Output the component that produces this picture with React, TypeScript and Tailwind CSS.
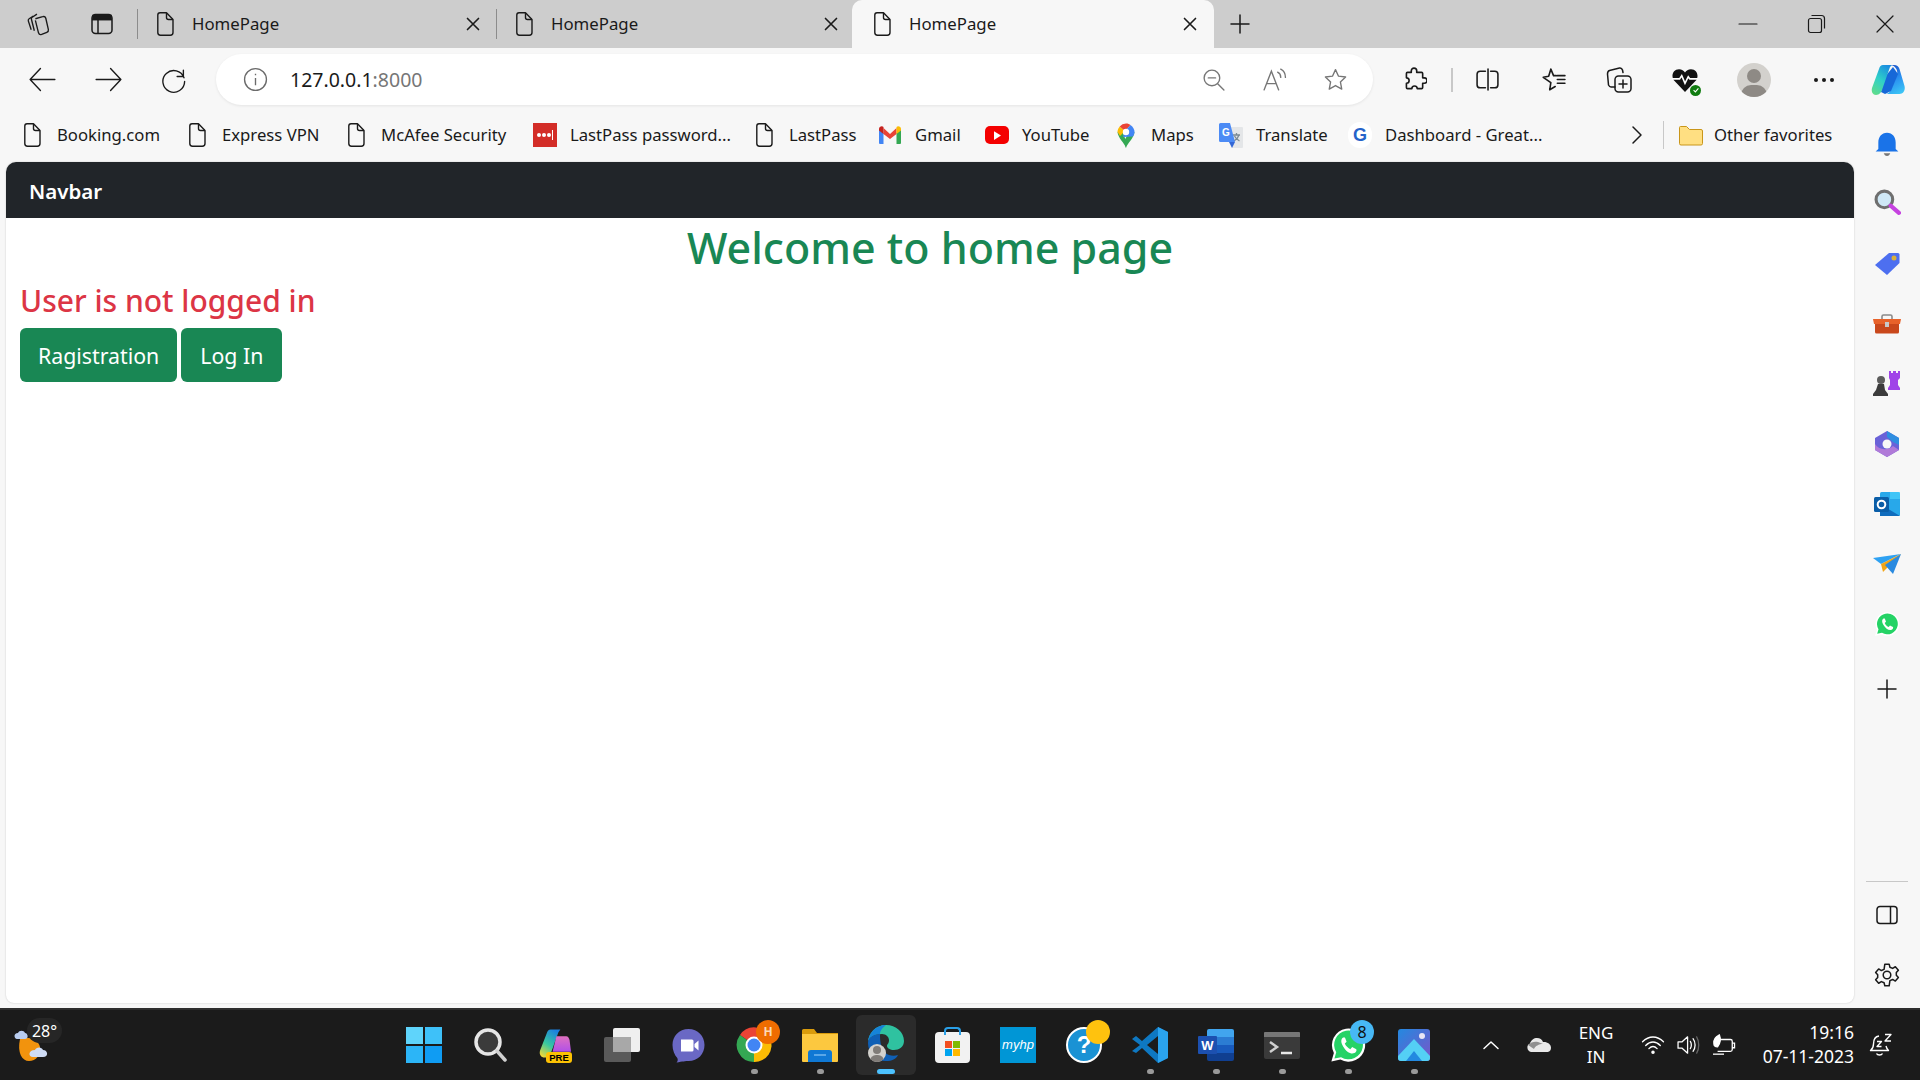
import React from "react";

type IconProps = { className?: string };

const Line: React.FC<{ d: string; className?: string; w?: number; c?: string; box?: number }> = ({
    d,
    className = "w-6 h-6",
    w = 1.5,
    c = "#1a1a1a",
    box = 24,
}) => (
    <svg viewBox={`0 0 ${box} ${box}`} className={className} fill="none" stroke={c} strokeWidth={w} strokeLinecap="round" strokeLinejoin="round">
        <path d={d} />
    </svg>
);

const PageIcon: React.FC<IconProps> = ({ className = "w-[17px] h-[24px]" }) => (
    <svg viewBox="0 0 17 24" className={className} fill="none" stroke="#1a1a1a" strokeWidth="1.4" strokeLinejoin="round">
        <path d="M3 .8h6.5L16 7.5V20.5A2.7 2.7 0 0 1 13.3 23.2H3.5A2.7 2.7 0 0 1 .8 20.5V3A2.2 2.2 0 0 1 3 .8Z" />
        <path d="M9.5 1V5.5A2 2 0 0 0 11.5 7.5H16" />
    </svg>
);

const Tab: React.FC<{ active?: boolean; second?: boolean }> = ({ active, second }) => (
    <div
        className={
            active
                ? "relative flex h-12 w-[362px] shrink-0 items-center rounded-t-[10px] bg-[#f7f7f7] pl-[22px] pr-[13px]"
                : second
                  ? "flex h-[36px] w-[355px] shrink-0 items-center pl-[19px] pr-[10px]"
                  : "flex h-[36px] w-[358px] shrink-0 items-center pl-[19px] pr-[12px]"
        }
    >
        <PageIcon />
        <span className="ml-[18px] text-[16.800px] text-[#1a1a1a]">HomePage</span>
        <Line d="M6 6 18 18M18 6 6 18" className="ml-auto h-[22px] w-[22px]" w={1.8} />
    </div>
);

const Bookmark: React.FC<{ icon: React.ReactNode; label: string; w: number }> = ({ icon, label, w }) => (
    <div className="flex h-full shrink-0 items-center" style={{ width: w }}>
        <div className="flex w-[24px] justify-center">{icon}</div>
        <span className="ml-[13px] whitespace-nowrap text-[16.7px] text-[#1a1a1a]">{label}</span>
    </div>
);

const LastPassIcon = () => (
    <div className="flex h-[24px] w-[24px] items-center justify-center gap-[1.5px] bg-[#d32d27]">
        <i className="h-[3.5px] w-[3.5px] rounded-full bg-white" />
        <i className="h-[3.5px] w-[3.5px] rounded-full bg-white" />
        <i className="h-[3.5px] w-[3.5px] rounded-full bg-white" />
        <i className="h-[10px] w-px bg-white" />
    </div>
);

const GmailIcon = () => (
    <svg viewBox="0 0 24 20" className="h-[20px] w-[24px]">
        <path d="M1 4v14a1 1 0 0 0 1 1h3.500V8Z" fill="#4285f4" />
        <path d="M18.500 8v11H22a1 1 0 0 0 1-1V4Z" fill="#34a853" />
        <path d="M5.500 3 12 9l6.500-6v6L12 14 5.500 9Z" fill="#ea4335" />
        <path d="M1 4c0-2.500 3-3.500 4.500-2V9L1 5.500Z" fill="#c5221f" />
        <path d="M23 4c0-2.500-3-3.500-4.500-2V9L23 5.500Z" fill="#fbbc04" />
    </svg>
);

const YoutubeIcon = () => (
    <div className="flex h-[18px] w-[24px] items-center justify-center rounded-[5px] bg-[#f40000]">
        <svg viewBox="0 0 8 10" className="h-[9px] w-[7px]"><path d="M0 0 8 5 0 10Z" fill="#fff" /></svg>
    </div>
);

const MapsIcon = () => (
    <svg viewBox="0 0 18 25" className="h-[25px] w-[18px]">
        <path d="M9 25C7.500 20 1 15 .5 9L5 7l4 11Z" fill="#34a853" />
        <path d="M9 25c1.500-5 8-10 8.500-16L13 8 7 18Z" fill="#34a853" />
        <path d="M.5 9C.5 7 1.500 5 2.700 3.500L8 8 3 13Z" fill="#fbbc04" />
        <path d="M2.700 3.500A8.700 8.700 0 0 1 9 .5c2 0 3.500.7 4.500 1.500L8 8Z" fill="#ea4335" />
        <path d="M13.500 2c2.500 1.800 4 4.500 4 7 0 1.500-.5 3-1.500 4.500L6 14 8 8Z" fill="#4285f4" />
        <circle cx="9" cy="9" r="3.200" fill="#fff" />
    </svg>
);

const TranslateIcon = () => (
    <svg viewBox="0 0 24 25" className="h-[25px] w-[24px]">
        <path d="M10 4h13a1 1 0 0 1 1 1v19a1 1 0 0 1-1 1H13Z" fill="#e4e6e8" />
        <path d="M14 12h7M17.500 10v2M20 12c-1 3-3 5-5 6M15.500 13c1 2 3 4 5 5" stroke="#7b8a93" fill="none" strokeWidth="1.300" />
        <path d="M1.500 0H11l5 19H1.500A1.500 1.500 0 0 1 0 17.500V1.500A1.500 1.500 0 0 1 1.500 0Z" fill="#4c8bf5" />
        <text x="3" y="13" fontSize="10" fontWeight="700" fill="#fff" fontFamily="Liberation Sans">G</text>
        <path d="M10 19h6l-3 6Z" fill="#3367d6" />
    </svg>
);

const GIcon = () => (
    <div className="flex h-[26px] w-[26px] items-center justify-center rounded-full bg-white">
        <span className="font-['Liberation_Sans'] text-[18px] font-bold leading-none text-[#2563c9]">G</span>
    </div>
);

const AddressBar = () => (
    <div className="flex h-[51px] w-[1157px] shrink-0 items-center rounded-full bg-white pl-[27px] pr-[25px] shadow-[0_1px_3px_rgba(0,0,0,0.08)]">
        <svg viewBox="0 0 24 24" className="h-[25px] w-[25px]" fill="none" stroke="#6b6b6b" strokeWidth="1.300">
            <circle cx="12" cy="12" r="10.500" />
            <path d="M12 10.500v7M12 6.500v1.500" />
        </svg>
        <span className="ml-[22px] text-[19.5px] text-[#1a1a1a]">
            127.0.0.1<span className="text-[#767676]">:8000</span>
        </span>
        <div className="ml-auto flex items-center gap-[36px]">
            <Line d="M10.500 3a7.500 7.500 0 1 1 0 15 7.500 7.500 0 0 1 0-15ZM7 10.500h7M16 16l6 6" c="#767676" className="h-[25px] w-[25px]" w={1.300} />
            <svg viewBox="0 0 24 24" className="h-[25px] w-[25px]" fill="none" stroke="#767676" strokeWidth="1.300" strokeLinecap="round">
                <path d="M2 22 9 4l7 18M4.500 16h9M15 5c2 1 3 3 3 5M18 2c3 1.500 4.500 4.500 4.500 8" />
            </svg>
            <Line d="M12 2.500l2.900 6.300 6.800.8-5 4.700 1.300 6.900-6-3.400-6 3.400 1.300-6.900-5-4.700 6.800-.8Z" c="#767676" className="h-[25px] w-[25px]" w={1.300} />
        </div>
    </div>
);

const HeartStatus = () => (
    <div className="relative h-[26px] w-[26px]">
        <svg viewBox="0 0 24 24" className="h-[26px] w-[26px]">
            <path d="M12 23 1.500 12C-1 8 1 2 6.500 2 9 2 11 3.500 12 5c1-1.500 3-3 5.500-3C23 2 25 8 22.500 12Z" fill="#111" />
            <path d="M0 11h7l2-3 3 7 3-6 1.500 2H24" stroke="#fff" strokeWidth="1.500" fill="none" />
        </svg>
        <div className="absolute -bottom-[3px] -right-[3px] flex h-[11px] w-[11px] items-center justify-center rounded-full bg-[#107c10]">
            <svg viewBox="0 0 10 10" className="h-[8px] w-[8px]"><path d="M2 5.200 4.200 7.400 8 3" stroke="#fff" strokeWidth="1.300" fill="none" /></svg>
        </div>
    </div>
);

const Avatar = () => (
    <div className="relative h-[34px] w-[34px] overflow-hidden rounded-full bg-[#d3d1cd]">
        <i className="absolute left-[10px] top-[6px] h-[14px] w-[14px] rounded-full bg-[#8e8a85]" />
        <i className="absolute left-[4px] top-[22px] h-[20px] w-[26px] rounded-full bg-[#8e8a85]" />
    </div>
);

// edge sidebar copilot button
const CopilotIcon = () => (
    <svg viewBox="0 0 34 32" className="h-[32px] w-[34px]">
        <defs>
            <linearGradient id="cpa" x1="0.700" y1="0" x2="0.200" y2="1">
                <stop offset="0" stopColor="#1b8fe0" />
                <stop offset="0.500" stopColor="#2fd0c8" />
                <stop offset="1" stopColor="#5fdc8c" />
            </linearGradient>
            <linearGradient id="cpb" x1="0.300" y1="0" x2="0.700" y2="1">
                <stop offset="0" stopColor="#1a50c8" />
                <stop offset="0.500" stopColor="#2a8ff0" />
                <stop offset="1" stopColor="#3cc4f5" />
            </linearGradient>
        </defs>
        <path d="M20 1h3c3 0 4.500 1.500 5.500 4l5 17c1 4-1 8-5 8H14c3 0 5-2 6-5l6-15c1-3-1-8-6-9Z" fill="url(#cpb)" />
        <path d="M13 14 22 3l5 7-7 17-6 3-4-2Z" fill="#1668d8" />
        <path d="M12 1h9l-2 2-8 23c-.8 2-2.500 5-6 5-3 0-5-3-4-7L8 5c.7-2.500 2-4 4-4Z" fill="url(#cpa)" />
    </svg>
);

const PreIcon = () => (
    <div className="relative h-[34px] w-[34px]">
        <svg viewBox="0 0 34 32" className="h-[32px] w-[33px]">
            <defs>
                <linearGradient id="pra" x1="0.700" y1="0" x2="0.200" y2="1">
                    <stop offset="0" stopColor="#1b7fe0" />
                    <stop offset="0.550" stopColor="#38c8a0" />
                    <stop offset="1" stopColor="#f0d838" />
                </linearGradient>
                <linearGradient id="prb" x1="0.500" y1="0" x2="0.500" y2="1">
                    <stop offset="0" stopColor="#e070c0" />
                    <stop offset="1" stopColor="#b050e8" />
                </linearGradient>
            </defs>
            <path d="M12 1h10l-2 3-8 22c-1 3-3 4-6 4-4 0-6-3-5-7L8 5c.7-2.500 2-4 4-4Z" fill="url(#pra)" />
            <path d="M18 8h10c2 0 3 2 3.500 4L33 24H14Z" fill="url(#prb)" />
        </svg>
        <span className="absolute -bottom-[1px] left-[7px] w-[26px] rounded-[3px] bg-[#fdc204] text-center font-['Liberation_Sans'] text-[9.500px] font-bold leading-[11px] text-black">PRE</span>
    </div>
);

const WhatsAppGlyph: React.FC<IconProps> = ({ className }) => (
    <svg viewBox="0 0 26 26" className={className}>
        <path d="M1 25l1.800-6.300A12 12 0 1 1 7.500 23.500Z" fill="#fff" />
        <path d="M3.200 22.800l1.300-4.500A10.400 10.400 0 1 1 8 21.800Z" fill="#25d366" />
        <path d="M9.500 7.500c-1.500 1-2 3 0 6.500s5 5.500 7.500 5c1.800-.5 2.500-2 2-3l-3-1.500-1.300 1.500c-1.500-.5-3.500-2.500-4-4l1.300-1.300L10.800 7.500Z" fill="#fff" />
    </svg>
);

const RailItem: React.FC<{ children: React.ReactNode }> = ({ children }) => (
    <div className="flex h-[60px] items-center justify-center">{children}</div>
);

const Sidebar = () => (
    <aside className="flex w-[66px] shrink-0 flex-col items-center pt-[3px]">
        <RailItem>
            <svg viewBox="0 0 24 24" className="h-[26px] w-[26px]">
                <path d="M12 1.500c5 0 8 4 8 9v6l2.500 2.500h-21L4 16.500v-6c0-5 3-9 8-9Z" fill="#1a73e8" />
                <path d="M9 20.500h6c-.5 1.500-1.500 2.500-3 2.500s-2.500-1-3-2.500Z" fill="#777" />
            </svg>
        </RailItem>
        <RailItem>
            <svg viewBox="0 0 26 26" className="h-[27px] w-[27px] -translate-y-[2px]">
                <circle cx="10" cy="10" r="8" fill="#cfe8f6" stroke="#6f6f6f" strokeWidth="3" />
                <path d="M16 16l8 7" stroke="#c643e0" strokeWidth="4" strokeLinecap="round" />
            </svg>
        </RailItem>
        <RailItem>
            <svg viewBox="0 0 26 24" className="h-[24px] w-[26px]">
                <path d="M15 1h9a1.500 1.500 0 0 1 1.500 1.500V11L13 23 1 13Z" fill="#4d6ff0" />
                <circle cx="20" cy="6" r="2.500" fill="#d9b13c" />
            </svg>
        </RailItem>
        <RailItem>
            <svg viewBox="0 0 28 20" className="h-[20px] w-[28px]">
                <path d="M9 5V2.500A1.500 1.500 0 0 1 10.500 1h7A1.500 1.500 0 0 1 19 2.500V5" stroke="#8a8a8a" strokeWidth="1.600" fill="none" />
                <path d="M0 5h28l-1 5H1Z" fill="#e8622a" />
                <path d="M2 10h24v8a1.500 1.500 0 0 1-1.500 1.500h-21A1.500 1.500 0 0 1 2 18Z" fill="#c9481c" />
                <rect x="12" y="8" width="4" height="5" fill="#c9c9c9" />
            </svg>
        </RailItem>
        <RailItem>
            <svg viewBox="0 0 28 26" className="h-[26px] w-[28px]">
                <path d="M16 0h2v2h2V0h3v2h2V0h2v7l-2 2v5l2 3v2H15v-2l2-3V9l-1-2Z" fill="#a044e8" />
                <circle cx="8" cy="9" r="4" fill="#5c5c5c" />
                <path d="M5 13h6l1 6 3 4v2H0v-2l3-4Z" fill="#3c3c3c" />
            </svg>
        </RailItem>
        <RailItem>
            <svg viewBox="0 0 24 26" className="h-[26px] w-[24px]">
                <path d="M12 0 24 7v12l-12 7L0 19V7Z" fill="#6a62d8" />
                <path d="M12 0 24 7v7l-6-3-6-5Z" fill="#2f8ee0" />
                <path d="M0 13c4 6 12 7 18 2l6 4-12 7L0 19Z" fill="#b07ad8" />
                <circle cx="12" cy="13" r="4.500" fill="#f7f7f7" />
            </svg>
        </RailItem>
        <RailItem>
            <svg viewBox="0 0 26 24" className="h-[24px] w-[26px]">
                <rect x="6" y="0" width="20" height="24" rx="1.500" fill="#28a8ea" />
                <rect x="16" y="0" width="10" height="7" fill="#50d9ff" opacity="0.600" />
                <path d="M6 12 26 24H6Z" fill="#0f6cbd" />
                <rect x="0" y="5" width="15" height="15" rx="1.500" fill="#0a5ea8" />
                <circle cx="7.500" cy="12.500" r="3.800" fill="none" stroke="#fff" strokeWidth="2" />
            </svg>
        </RailItem>
        <RailItem>
            <svg viewBox="0 0 28 20" className="h-[20px] w-[28px]">
                <path d="M0 4 28 0 8 10Z" fill="#2ea1f2" />
                <path d="M28 0 8 10l2 8Z" fill="#f2a516" />
                <path d="M28 0 12 11l8 9Z" fill="#2a8ae0" />
            </svg>
        </RailItem>
        <RailItem>
            <WhatsAppGlyph className="h-[26px] w-[26px]" />
        </RailItem>
        <div className="flex h-[70px] items-center justify-center">
            <Line d="M12 3v18M3 12h18" className="h-[24px] w-[24px]" />
        </div>
        <div className="mt-auto h-px w-[42px] bg-[#c8c8c8]" />
        <div className="mt-[19px] flex h-[28px] items-center">
            <svg viewBox="0 0 24 24" className="h-[24px] w-[24px]" fill="none" stroke="#1a1a1a" strokeWidth="1.500">
                <rect x="2" y="3.500" width="20" height="17" rx="3" />
                <path d="M15.500 3.500v17" />
            </svg>
        </div>
        <div className="mb-[13px] mt-[31px] flex h-[30px] items-center">
            <Line d="M12 8.500a3.500 3.500 0 1 0 0 7 3.500 3.500 0 0 0 0-7ZM10 2h4l.7 2.800 2.500 1.100 2.500-1.500 2.800 3.200-1.900 2.200v2.400l1.900 2.200-2.800 3.200-2.500-1.500-2.500 1.100L14 22h-4l-.7-2.800-2.500-1.100-2.500 1.500-2.800-3.200 1.900-2.200v-2.400L1.500 9.600l2.800-3.200 2.500 1.500 2.500-1.100Z" className="h-[26px] w-[26px]" w={1.400} />
        </div>
    </aside>
);

const TaskIcon: React.FC<{ children: React.ReactNode; dot?: boolean; active?: boolean }> = ({ children, dot, active }) => (
    <div className="relative flex h-[60px] w-[66px] items-center justify-center">
        {active && <i className="absolute inset-y-0 left-[3px] right-[3px] rounded-[6px] bg-[#2b2b2b]" />}
        <div className="relative flex items-center justify-center">{children}</div>
        {dot && <i className="absolute bottom-[1px] left-[30px] h-[5px] w-[7px] rounded-full bg-[#9a9a9a]" />}
        {active && <i className="absolute bottom-[1px] left-[24px] h-[5px] w-[18px] rounded-full bg-[#4cc2ff]" />}
    </div>
);

const Taskbar = () => (
    <footer className="relative flex h-[72px] shrink-0 items-center border-t-2 border-[#2e2e2e] bg-[#1b1b1b]">
        <div className="absolute left-[14px] top-[8px] h-[52px] w-[50px]">
            <svg viewBox="0 0 38 36" className="absolute left-0 top-[9px] h-[36px] w-[38px]">
                <path d="M6 12c8-3 18 0 20 8 1 8-4 14-11 14C8 34 3 26 6 12Z" fill="#f2930d" />
                <path d="M4 6c1-3 6-3 7 0 3 0 4 6 0 6H3C0 12-1 6 4 6Z" fill="#b9cdf0" />
                <path d="M21 23c1-3.500 7-3.500 8 0 5 0 6 7 0 7H19c-5 0-5-7 2-7Z" fill="#cfdcf5" />
            </svg>
            <span className="absolute left-[13px] top-0 flex h-[25px] w-[35px] items-center justify-center rounded-full bg-[#262626] text-[16px] leading-none text-white">28°</span>
        </div>

        <div className="ml-[391px] flex items-center">
            <TaskIcon>
                <div className="grid h-[36px] w-[36px] grid-cols-2 gap-[1.500px]">
                    <i className="bg-[#5fd4fb]" />
                    <i className="bg-[#3ec1f9]" />
                    <i className="bg-[#2cb5f7]" />
                    <i className="bg-[#0f9cf3]" />
                </div>
            </TaskIcon>
            <TaskIcon>
                <svg viewBox="0 0 34 36" className="h-[36px] w-[34px]">
                    <circle cx="15" cy="15" r="12" fill="#3b3b3b" stroke="#e6e6e6" strokeWidth="3.500" />
                    <path d="M24 24l8 9" stroke="#d0d0d0" strokeWidth="3.500" strokeLinecap="round" />
                </svg>
            </TaskIcon>
            <TaskIcon>
                <PreIcon />
            </TaskIcon>
            <TaskIcon>
                <div className="relative h-[34px] w-[36px]">
                    <i className="absolute left-0 top-[9px] h-[25px] w-[27px] rounded-[2px] bg-[#5a5a5a]" />
                    <i className="absolute left-[9px] top-0 h-[24px] w-[27px] rounded-[2px] bg-[#efefef]" />
                    <i className="absolute left-[9px] top-[9px] h-[15px] w-[18px] bg-[#a8a8a8]" />
                </div>
            </TaskIcon>
            <TaskIcon>
                <svg viewBox="0 0 33 35" className="h-[35px] w-[33px]">
                    <path d="M16.500 1C26 1 32.500 8 32.500 17S26 33 16.500 33c-3 0-6 .5-12 1.500 1.500-1.500 1.500-3 .8-4.500C2.500 27 .5 22 .5 17 .5 8 7 1 16.500 1Z" fill="#6a68c4" />
                    <path d="M9 11.500h11a1.500 1.500 0 0 1 1.500 1.500v9a1.500 1.500 0 0 1-1.500 1.500H9Z" fill="#fff" />
                    <path d="M22.500 16l4-3.500v10l-4-3.500Z" fill="#fff" />
                </svg>
            </TaskIcon>
            <TaskIcon dot>
                <div className="relative h-[36px] w-[36px]">
                    <svg viewBox="0 0 36 36" className="h-[36px] w-[36px]">
                        <path d="M18 18 4 8A17 17 0 0 1 34 11Z" fill="#ea4335" />
                        <path d="M18 18 34 11a17 17 0 0 1-16 24Z" fill="#fbbc04" />
                        <path d="M18 18v17A17 17 0 0 1 4 8Z" fill="#34a853" />
                        <circle cx="18" cy="18" r="8.500" fill="#fff" />
                        <circle cx="18" cy="18" r="6.500" fill="#4285f4" />
                    </svg>
                    <span className="absolute -right-[8px] -top-[7px] flex h-[24px] w-[24px] items-center justify-center rounded-full bg-[#ef6c00] text-[12px] font-bold leading-none text-[#fcd9b6]">H</span>
                </div>
            </TaskIcon>
            <TaskIcon dot>
                <svg viewBox="0 0 36 33" className="h-[33px] w-[36px]">
                    <path d="M0 1.500A1.500 1.500 0 0 1 1.500 0H12l3 4h21v8H0Z" fill="#d99b0c" />
                    <path d="M0 5h36v27a1 1 0 0 1-1 1H1a1 1 0 0 1-1-1Z" fill="#fcc83f" />
                    <path d="M6 33V24a3 3 0 0 1 3-3h18a3 3 0 0 1 3 3v9Z" fill="#0f78d4" />
                    <path d="M12 26h12" stroke="#8cc8f5" strokeWidth="1.200" />
                </svg>
            </TaskIcon>
            <TaskIcon active>
                <div className="relative h-[36px] w-[36px] -translate-y-[2px]">
                    <svg viewBox="0 0 36 36" className="h-[36px] w-[36px]">
                        <path d="M0 18C0 8 8 0 18 0c10 0 18 7 18 16 0 6-5 9-10 9-4 0-7-2-7-4 0-2 2-2 2-6 0-3-3-6-7-6C7 9 0 12 0 18Z" fill="#2fc2a0" />
                        <path d="M0 18C0 8 8 0 18 0c-5 4-6 7-6 9C7 9 0 12 0 18Z" fill="#1683d8" />
                        <path d="M0 18c0 10 8 18 18 18 6 0 10-2 12-6-3 1-6 1-9 0-5-2-9-6-9-21C7 9 0 12 0 18Z" fill="#0f5fb5" />
                    </svg>
                    <div className="absolute bottom-[-1px] left-0 h-[18px] w-[18px] overflow-hidden rounded-full bg-[#d3d1cd]">
                        <i className="absolute left-[5px] top-[2px] h-[8px] w-[8px] rounded-full bg-[#807c78]" />
                        <i className="absolute left-[2px] top-[11px] h-[12px] w-[14px] rounded-full bg-[#807c78]" />
                    </div>
                </div>
            </TaskIcon>
            <TaskIcon>
                <div className="relative mt-[4px] h-[31px] w-[35px] rounded-[4px] bg-[#f2f2f2]">
                    <i className="absolute -top-[5px] left-[9px] h-[8px] w-[17px] rounded-t-[4px] border-2 border-b-0 border-[#2aa0e8]" />
                    <div className="absolute left-[10px] top-[9px] grid h-[15px] w-[15px] grid-cols-2 gap-[1px]">
                        <i className="bg-[#f25022]" />
                        <i className="bg-[#7fba00]" />
                        <i className="bg-[#00a4ef]" />
                        <i className="bg-[#ffb900]" />
                    </div>
                </div>
            </TaskIcon>
            <TaskIcon>
                <div className="flex h-[36px] w-[36px] items-center justify-center bg-[#0096d6] font-['Liberation_Sans'] text-[13px] italic text-white">myhp</div>
            </TaskIcon>
            <TaskIcon>
                <div className="relative h-[36px] w-[36px]">
                    <div className="flex h-[36px] w-[36px] items-center justify-center rounded-full border-2 border-white bg-[#1a92d4] font-['Liberation_Sans'] text-[24px] font-bold text-white">?</div>
                    <i className="absolute -right-[8px] -top-[7px] h-[24px] w-[24px] rounded-full bg-[#ffc20e]" />
                </div>
            </TaskIcon>
            <TaskIcon dot>
                <svg viewBox="0 0 36 36" className="h-[36px] w-[36px]">
                    <path d="M26 0 36 5v26l-10 5L10 21l-6 5-4-2 8-6-8-6 4-3 6 5Z" fill="#0e78c2" />
                    <path d="M26 9 15 18l11 9Z" fill="#1b1b1b" />
                    <path d="M26 0 36 5v26l-10 5Z" fill="#2aa3ee" />
                </svg>
            </TaskIcon>
            <TaskIcon dot>
                <div className="relative h-[32px] w-[36px]">
                    <div className="absolute left-[9px] top-0 flex h-[32px] w-[27px] flex-col">
                        <i className="flex-1 rounded-t-[2px] bg-[#41a5ee]" />
                        <i className="flex-1 bg-[#2b7cd3]" />
                        <i className="flex-1 bg-[#185abd]" />
                        <i className="flex-1 rounded-b-[2px] bg-[#103f91]" />
                    </div>
                    <span className="absolute left-0 top-[7px] flex h-[18px] w-[19px] items-center justify-center rounded-[1px] bg-[#1c50b0] font-['Liberation_Sans'] text-[13px] font-bold leading-none text-white">W</span>
                </div>
            </TaskIcon>
            <TaskIcon dot>
                <svg viewBox="0 0 36 27" className="h-[27px] w-[36px]">
                    <rect width="36" height="27" rx="2" fill="#3a3a3a" />
                    <path d="M1 0h34a1 1 0 0 1 1 1v4H0V1a1 1 0 0 1 1-1Z" fill="#777" />
                    <path d="M6 10l7 5-7 5" stroke="#cfcfcf" strokeWidth="2.500" fill="none" />
                    <path d="M17 21h11" stroke="#e8e8e8" strokeWidth="2.500" />
                </svg>
            </TaskIcon>
            <TaskIcon dot>
                <div className="relative h-[36px] w-[36px]">
                    <WhatsAppGlyph className="h-[36px] w-[36px]" />
                    <span className="absolute -right-[8px] -top-[7px] flex h-[24px] w-[24px] items-center justify-center rounded-full bg-[#47b8f5] text-[16px] leading-none text-[#101010]">8</span>
                </div>
            </TaskIcon>
            <TaskIcon dot>
                <svg viewBox="0 0 32 32" className="h-[32px] w-[32px]">
                    <defs>
                        <linearGradient id="ph" x1="0" y1="0" x2="1" y2="1">
                            <stop offset="0" stopColor="#2389e0" />
                            <stop offset="1" stopColor="#7a55c8" />
                        </linearGradient>
                    </defs>
                    <rect width="32" height="32" rx="3" fill="url(#ph)" />
                    <circle cx="24" cy="7" r="3" fill="#e8e6f5" />
                    <path d="M0 27 16 10l16 17v2a3 3 0 0 1-3 3H3a3 3 0 0 1-3-3Z" fill="#54d0f5" />
                    <path d="M8 32l8-10 8 10Z" fill="#2389e0" />
                </svg>
            </TaskIcon>
        </div>

        <div className="ml-[32px] flex h-full items-center text-white">
            <Line d="M5 15.500 12 9l7 6.500" c="#fff" className="h-[24px] w-[24px]" />
            <svg viewBox="0 0 26 16" className="ml-[23px] h-[16px] w-[26px]">
                <path d="M5 15A4.500 4.500 0 0 1 4 6.500C5 3 8 1 11 1c3 0 5 1.500 6 4 4-.5 8 2 8 5.500S23 15 21 15Z" fill="#e8e8e8" />
                <path d="M2 8c3-3 7-4 10-3l5 2c-4 0-8 2-9 5Z" fill="#8f8f8f" />
            </svg>
            <div className="ml-[19px] flex w-[50px] flex-col items-center text-[17px] leading-[24px]">
                <span>ENG</span>
                <span>IN</span>
            </div>
            <svg viewBox="0 0 26 22" className="ml-[20px] h-[20px] w-[24px]" fill="none" stroke="#fff" strokeWidth="1.500" strokeLinecap="round">
                <path d="M1.500 7.500c7-7 16-7 23 0M5 11.500c5-5 11-5 16 0M8.500 15c3-3 6-3 9 0" />
                <circle cx="13" cy="19" r="1.200" fill="#fff" />
            </svg>
            <svg viewBox="0 0 26 22" className="ml-[11px] h-[20px] w-[25px]" fill="none" stroke="#fff" strokeWidth="1.400" strokeLinejoin="round">
                <path d="M1.500 7.500H6L12 2v18l-6-5.500H1.500Z" />
                <path d="M15 7c1.500 2 1.500 6 0 8M18 4c3 4 3 10 0 14" strokeLinecap="round" />
                <path d="M22 2c3 5 3 13 0 18" stroke="#666" strokeLinecap="round" />
            </svg>
            <svg viewBox="0 0 26 24" className="ml-[11px] h-[22px] w-[24px]" fill="none" stroke="#fff" strokeWidth="1.400">
                <path d="M8 6h12a2 2 0 0 1 2 2v9a2 2 0 0 1-2 2H6M22 10h2.500v5H22" />
                <path d="M8 1c-4 2-7 5-6 10 0 2 2 3 4 3 3-4 4-8 2-13Z" fill="#fff" />
                <path d="M1 22h12" />
            </svg>
            <div className="ml-[23px] -mt-[2px] flex w-[95px] flex-col items-end text-[17.500px] leading-[24px]">
                <span>19:16</span>
                <span className="whitespace-nowrap">07-11-2023</span>
            </div>
            <svg viewBox="0 0 24 24" className="ml-[15px] h-[24px] w-[24px]" fill="none" stroke="#fff" strokeWidth="1.400" strokeLinejoin="round">
                <path d="M10 3C6 3.500 4.500 7 4.500 11c0 3-1 5-3 6.500h18C18 16 17.500 15 17 13" />
                <path d="M7.500 20.500c1 2 5 2 6 0" />
                <path d="M8 8.500h4.500L8 13.500h4.500M16 1.500h6L16 8h6" strokeWidth="1.300" />
            </svg>
        </div>
    </footer>
);

export default function App() {
    return (
        <div className="flex h-[1080px] w-[1920px] flex-col overflow-hidden bg-[#f7f7f7] font-['Noto_Sans',sans-serif]">
            {/* tab strip */}
            <div className="flex h-12 shrink-0 items-center bg-[#cdcdcd]">
                <div className="flex w-[137px] shrink-0 items-center pl-[26px]">
                    <svg viewBox="0 0 24 24" className="h-[25px] w-[25px] shrink-0" fill="none" stroke="#1a1a1a" strokeWidth="1.300" strokeLinejoin="round">
                        <path d="M9 6.500 16 4.500c1.500-.5 2.500 0 3 1.500l2.500 11c.3 1.500-.3 2-1.500 2.500l-5 2c-1.500.5-2.500 0-3-1.500L9 8M7 4 3 6.500c-.8.5-1 1-.8 2L5 17M10.500 2 6 5c-.8.5-1 1-.8 2l2.800 11" />
                    </svg>
                    <svg viewBox="0 0 24 24" className="ml-[39px] h-[24px] w-[24px] shrink-0" fill="none" stroke="#1a1a1a" strokeWidth="1.500">
                        <rect x="2" y="2.500" width="20" height="19" rx="3.500" />
                        <path d="M2 7.500h20" />
                        <path d="M3 3.500h18v4H3Z" fill="#1a1a1a" />
                        <path d="M8 7.500v14" />
                    </svg>
                </div>
                <div className="h-[30px] w-px shrink-0 bg-[#8c8c8c]" />
                <Tab />
                <div className="h-[30px] w-px shrink-0 bg-[#8c8c8c]" />
                <Tab second />
                <Tab active />
                <Line d="M12 3v18M3 12h18" className="ml-[14px] h-[24px] w-[24px]" w={1.500} />
                <div className="ml-auto flex items-center pr-[23px]">
                    <Line d="M3 12h18" className="h-[24px] w-[24px]" w={1.100} />
                    <svg viewBox="0 0 24 24" className="ml-[44px] h-[24px] w-[24px]" fill="none" stroke="#1a1a1a" strokeWidth="1.200">
                        <rect x="4.500" y="6.500" width="13" height="14" rx="2" />
                        <path d="M7.500 3.500h10a3 3 0 0 1 3 3v10" />
                    </svg>
                    <Line d="M4 4 20 20M20 4 4 20" className="ml-[45px] h-[24px] w-[24px]" w={1.200} />
                </div>
            </div>

            {/* toolbar */}
            <div className="flex h-[63px] shrink-0 items-center">
                <div className="flex w-[216px] shrink-0 items-center pl-[26px]">
                    <Line d="M21 12H3M10.500 4 3 12l7.500 8" className="h-[33px] w-[33px]" w={1} />
                    <Line d="M3 12h18M13.500 4 21 12l-7.500 8" className="ml-[33px] h-[33px] w-[33px]" w={1} />
                    <Line d="M19.500 5v5h-5M20 11A8.700 8.700 0 1 0 20.500 14" className="ml-[34px] h-[30px] w-[30px] -translate-y-[1px]" w={1.100} />
                </div>
                <AddressBar />
                <div className="ml-[28px] flex items-center">
                    <Line d="M9.500 3.500a2.500 2.500 0 0 1 5 0V5H19a1 1 0 0 1 1 1v4h1.500a2.500 2.500 0 0 1 0 5H20v4a1 1 0 0 1-1 1h-4a2.500 2.500 0 0 0-5 0H6a1 1 0 0 1-1-1v-4a2.500 2.500 0 0 0 0-5V6a1 1 0 0 1 1-1h3.500Z" className="h-[26px] w-[26px]" w={1.500} />
                    <div className="ml-[24px] h-[24px] w-[2px] bg-[#c8c8c8]" />
                    <svg viewBox="0 0 24 24" className="ml-[22px] h-[25px] w-[25px]" fill="none" stroke="#1a1a1a" strokeWidth="1.500" strokeLinecap="round">
                        <path d="M10 4H5a3 3 0 0 0-3 3v10a3 3 0 0 0 3 3h5M15 4h4a3 3 0 0 1 3 3v10a3 3 0 0 1-3 3h-4M12.500 2v20" />
                    </svg>
                    <svg viewBox="0 0 24 24" className="ml-[40px] h-[26px] w-[26px]" fill="none" stroke="#1a1a1a" strokeWidth="1.500" strokeLinejoin="round" strokeLinecap="round">
                        <path d="M10 2 12.500 8 H15M9 21l1-6.500-7-5L8 8.500 10 2M9 21l5-3M16 11.500h7M16 15h7M16 8h7" />
                    </svg>
                    <svg viewBox="0 0 26 26" className="ml-[40px] h-[26px] w-[26px]" fill="none" stroke="#1a1a1a" strokeWidth="1.500" strokeLinejoin="round" strokeLinecap="round">
                        <path d="M9 20 5 20C3.500 20 3 19 2.500 18L1.500 7c0-1.500.5-3 2-3.500l10-2.500c1.500-.3 2.500.5 3 2l.5 2.500" />
                        <rect x="9" y="9" width="16" height="16" rx="3.500" />
                        <path d="M17 13v8M13 17h8" />
                    </svg>
                    <div className="ml-[40px]">
                        <HeartStatus />
                    </div>
                    <div className="ml-[39px]">
                        <Avatar />
                    </div>
                    <div className="ml-[43px] flex gap-[4px]">
                        <i className="h-[4px] w-[4px] rounded-full bg-[#1a1a1a]" />
                        <i className="h-[4px] w-[4px] rounded-full bg-[#1a1a1a]" />
                        <i className="h-[4px] w-[4px] rounded-full bg-[#1a1a1a]" />
                    </div>
                    <div className="ml-[37px]">
                        <CopilotIcon />
                    </div>
                </div>
            </div>

            {/* favorites bar + page, side rail next to them */}
            <div className="flex min-h-0 flex-1">
                <div className="flex min-w-0 flex-1 flex-col">
                    <div className="mb-[3px] flex h-12 shrink-0 items-center pl-[20px]">
                        <Bookmark icon={<PageIcon />} label="Booking.com" w={165} />
                        <Bookmark icon={<PageIcon />} label="Express VPN" w={159} />
                        <Bookmark icon={<PageIcon />} label="McAfee Security" w={189} />
                        <Bookmark icon={<LastPassIcon />} label="LastPass password..." w={219} />
                        <Bookmark icon={<PageIcon />} label="LastPass" w={126} />
                        <Bookmark icon={<GmailIcon />} label="Gmail" w={107} />
                        <Bookmark icon={<YoutubeIcon />} label="YouTube" w={129} />
                        <Bookmark icon={<MapsIcon />} label="Maps" w={105} />
                        <Bookmark icon={<TranslateIcon />} label="Translate" w={129} />
                        <Bookmark icon={<GIcon />} label="Dashboard - Great..." w={277} />
                        <Line d="M8 4l8 8-8 8" className="h-[24px] w-[24px] shrink-0" w={1.500} />
                        <div className="ml-[14px] h-[28px] w-px shrink-0 bg-[#c8c8c8]" />
                        <svg viewBox="0 0 24 20" className="ml-[15px] h-[21px] w-[24px] shrink-0">
                            <path d="M1.500 1h6l3 3H22a1.500 1.500 0 0 1 1.500 1.500V18a1.500 1.500 0 0 1-1.500 1.500H2A1.500 1.500 0 0 1 .5 18V2A1 1 0 0 1 1.500 1Z" fill="#ffdf82" stroke="#c9961a" />
                        </svg>
                        <span className="ml-[11px] whitespace-nowrap text-[16.700px] text-[#1a1a1a]">Other favorites</span>
                    </div>
                    <main className="ml-[6px] flex min-h-0 flex-1 flex-col overflow-hidden rounded-t-[10px] rounded-b-[8px] bg-white shadow-[0_0_2px_rgba(0,0,0,0.2)]">
                        <nav className="flex h-[56px] shrink-0 items-center bg-[#212529] pl-[23px]">
                            <span className="translate-y-[1px] text-[20.500px] font-semibold text-white">Navbar</span>
                        </nav>
                        <h2 className="mt-[4px] text-center text-[43px] font-medium leading-[52px] text-[#198754]">Welcome to home page</h2>
                        <h4 className="ml-[14px] mt-[5px] text-[30px] font-medium leading-[44px] text-[#dc3545]">User is not logged in</h4>
                        <div className="ml-[14px] mt-[5px] flex gap-[4px]">
                            <button className="h-[54px] rounded-[6px] bg-[#198754] px-[18px] pt-[1px] text-[21.300px] text-white">Ragistration</button>
                            <button className="h-[54px] rounded-[6px] bg-[#198754] px-[19px] pt-[1px] text-[21.300px] text-white">Log In</button>
                        </div>
                    </main>
                </div>
                <Sidebar />
            </div>
            <div className="h-[5px] shrink-0" />
            <Taskbar />
        </div>
    );
}
